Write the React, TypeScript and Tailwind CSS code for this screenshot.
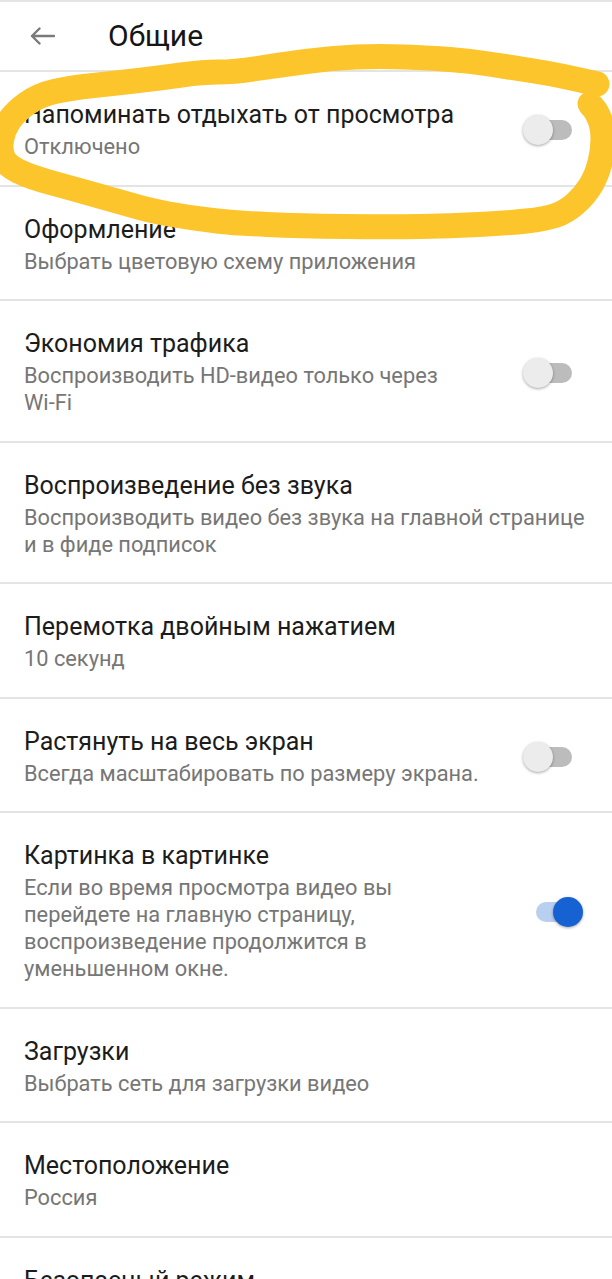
import React from 'react';

type Item = {
  title: string;
  subtitle: React.ReactNode;
  toggle?: 'on' | 'off';
};

const items: Item[] = [
  { title: 'Напоминать отдыхать от просмотра', subtitle: 'Отключено', toggle: 'off' },
  { title: 'Оформление', subtitle: 'Выбрать цветовую схему приложения' },
  {
    title: 'Экономия трафика',
    subtitle: (
      <>
        Воспроизводить HD-видео только через <span className="whitespace-nowrap">Wi-Fi</span>
      </>
    ),
    toggle: 'off',
  },
  {
    title: 'Воспроизведение без звука',
    subtitle: 'Воспроизводить видео без звука на главной странице и в фиде подписок',
  },
  { title: 'Перемотка двойным нажатием', subtitle: '10 секунд' },
  { title: 'Растянуть на весь экран', subtitle: 'Всегда масштабировать по размеру экрана.', toggle: 'off' },
  {
    title: 'Картинка в картинке',
    subtitle:
      'Если во время просмотра видео вы перейдете на главную страницу, воспроизведение продолжится в уменьшенном окне.',
    toggle: 'on',
  },
  { title: 'Загрузки', subtitle: 'Выбрать сеть для загрузки видео' },
  { title: 'Местоположение', subtitle: 'Россия' },
  { title: 'Безопасный режим', subtitle: 'Отключено', toggle: 'off' },
];

// центр линии маркера, обведённого вокруг первого пункта
const markerPoints: [number, number][] = [
  [597, 84], [560, 75], [508, 67], [470, 61], [430, 58], [380, 56], [332, 58],
  [280, 65], [234, 72], [203, 72], [160, 78], [117, 83], [70, 88], [39, 95],
  [15, 112], [3, 130], [0, 150], [6, 165], [30, 177], [78, 190], [120, 202],
  [156, 212], [200, 219], [234, 223], [300, 226], [390, 227], [450, 226],
  [508, 223], [545, 219], [566, 212], [585, 195], [597, 175], [603, 150],
  [603, 128], [597, 112], [590, 104],
];

const smoothPath = (pts: [number, number][]) => {
  let d = `M ${pts[0][0]} ${pts[0][1]}`;
  for (let i = 1; i < pts.length - 1; i++) {
    const [x, y] = pts[i];
    const [nx, ny] = pts[i + 1];
    d += ` Q ${x} ${y} ${(x + nx) / 2} ${(y + ny) / 2}`;
  }
  const last = pts[pts.length - 1];
  d += ` L ${last[0]} ${last[1]}`;
  return d;
};

function Switch({ on }: { on: boolean }) {
  return (
    <div className="relative ml-auto h-[30px] w-[60px] shrink-0">
      <div
        className={`absolute top-[5px] h-[20px] rounded-full ${
          on ? 'left-[13px] w-[36px] bg-[#b9cff0]' : 'left-[12px] w-[37px] bg-[#bcbcbc]'
        }`}
      />
      <div
        className={`absolute top-0 h-[30px] w-[30px] rounded-full shadow-[0_1px_3px_rgba(0,0,0,0.35)] ${
          on ? 'left-[30px] bg-[#1662d2]' : 'left-0 bg-[#ececec]'
        }`}
      />
    </div>
  );
}

export default function App() {
  return (
    <div
      className="relative min-h-screen bg-white"
      style={{ fontFamily: 'Roboto, "Noto Sans", sans-serif' }}
    >
      <header className="flex h-[72px] items-center border-t-2 border-b-2 border-[#e4e4e4] pl-[29px]">
        <svg width="26" height="18" viewBox="0 0 26 18" className="shrink-0">
          <path
            d="M25 9H3M10.5 1.5L3 9l7.5 7.5"
            fill="none"
            stroke="#7a7a7a"
            strokeWidth="2.4"
            strokeLinecap="round"
            strokeLinejoin="round"
          />
        </svg>
        <h1 className="ml-[53px] text-[30px] leading-none text-[#151515]">Общие</h1>
      </header>

      <ul>
        {items.map((item) => (
          <li
            key={item.title}
            className="flex items-center border-b-2 border-[#e4e4e4] pt-[28px] pb-[24.5px] pl-6 pr-[29px]"
          >
            <div className={item.toggle ? 'w-[460px] min-w-0' : 'min-w-0 flex-1 -mr-[9px]'}>
              <div className="text-[25px] leading-[30px] text-[#1c1c1c]">{item.title}</div>
              <div className="mt-[3px] text-[21.8px] leading-[27px] text-[#767676]">{item.subtitle}</div>
            </div>
            {item.toggle && <Switch on={item.toggle === 'on'} />}
          </li>
        ))}
      </ul>

      <svg
        className="pointer-events-none absolute left-0 top-0"
        width="612"
        height="260"
        viewBox="0 0 612 260"
      >
        <path
          d={smoothPath(markerPoints)}
          fill="none"
          stroke="#fdc52c"
          strokeWidth="25"
          strokeLinecap="round"
          strokeLinejoin="round"
        />
      </svg>
    </div>
  );
}
